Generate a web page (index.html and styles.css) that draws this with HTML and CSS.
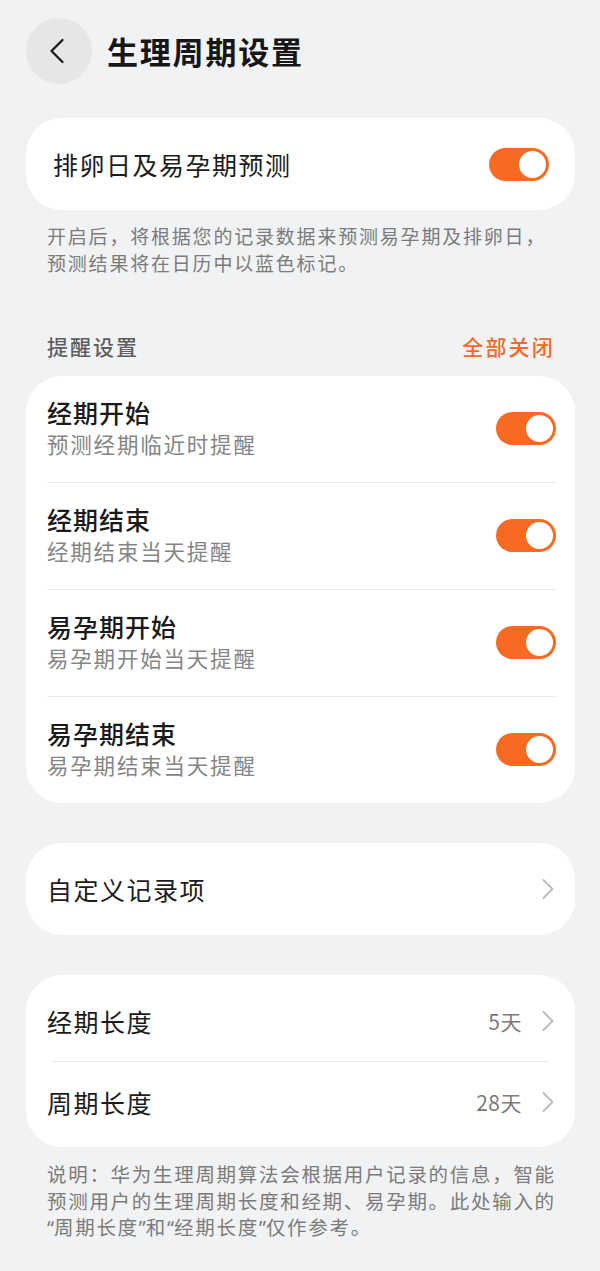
FILE: index.html
```html
<!DOCTYPE html>
<html lang="zh-CN">
<head>
<meta charset="utf-8">
<title>生理周期设置</title>
<link rel="stylesheet" href="styles.css">
</head>
<body>
<div class="page">
  <header class="topbar">
    <div class="back">
      <svg width="16" height="26" viewBox="0 0 16 26"><path d="M13.5 2 L2.5 13 L13.5 24" fill="none" stroke="#1c1c1c" stroke-width="2.3" stroke-linecap="round" stroke-linejoin="round"/></svg>
    </div>
    <h1 class="title">生理周期设置</h1>
  </header>

  <section class="card card-main">
    <div class="main-label">排卵日及易孕期预测</div>
    <div class="toggle"><span class="knob"></span></div>
  </section>
  <p class="desc">开启后，将根据您的记录数据来预测易孕期及排卵日，<br>预测结果将在日历中以蓝色标记。</p>

  <div class="section-head">
    <span class="section-title">提醒设置</span>
    <span class="section-action">全部关闭</span>
  </div>

  <section class="card card-list">
    <div class="row">
      <div class="row-text"><div class="row-title">经期开始</div><div class="row-sub">预测经期临近时提醒</div></div>
      <div class="toggle"><span class="knob"></span></div>
    </div>
    <div class="row">
      <div class="row-text"><div class="row-title">经期结束</div><div class="row-sub">经期结束当天提醒</div></div>
      <div class="toggle"><span class="knob"></span></div>
    </div>
    <div class="row">
      <div class="row-text"><div class="row-title">易孕期开始</div><div class="row-sub">易孕期开始当天提醒</div></div>
      <div class="toggle"><span class="knob"></span></div>
    </div>
    <div class="row">
      <div class="row-text"><div class="row-title">易孕期结束</div><div class="row-sub">易孕期结束当天提醒</div></div>
      <div class="toggle"><span class="knob"></span></div>
    </div>
  </section>

  <section class="card card-single">
    <div class="nav-label">自定义记录项</div>
    <svg class="chev" width="14" height="22" viewBox="0 0 14 22"><path d="M2.5 2 L11.5 11 L2.5 20" fill="none" stroke="#bdbdbd" stroke-width="2" stroke-linecap="round" stroke-linejoin="round"/></svg>
  </section>

  <section class="card card-values">
    <div class="vrow">
      <div class="nav-label">经期长度</div>
      <div class="vright"><span class="value">5天</span><svg class="chev" width="14" height="22" viewBox="0 0 14 22"><path d="M2.5 2 L11.5 11 L2.5 20" fill="none" stroke="#bdbdbd" stroke-width="2" stroke-linecap="round" stroke-linejoin="round"/></svg></div>
    </div>
    <div class="vdivider"></div>
    <div class="vrow">
      <div class="nav-label">周期长度</div>
      <div class="vright"><span class="value">28天</span><svg class="chev" width="14" height="22" viewBox="0 0 14 22"><path d="M2.5 2 L11.5 11 L2.5 20" fill="none" stroke="#bdbdbd" stroke-width="2" stroke-linecap="round" stroke-linejoin="round"/></svg></div>
    </div>
  </section>

  <p class="note">说明：华为生理周期算法会根据用户记录的信息，智能预测用户的生理周期长度和经期、易孕期。此处输入的<span class="q">“</span>周期长度<span class="q">”</span>和<span class="q">“</span>经期长度<span class="q">”</span>仅作参考。</p>
</div>
</body>
</html>
```

FILE: styles.css
```css
* { box-sizing: border-box; }
html, body { margin: 0; padding: 0; }
body {
  background: #f1f2f4;
  font-family: "Noto Sans CJK SC", "Noto Sans", sans-serif;
  color: #1a1a1a;
}
.page {
  width: 600px;
  padding: 18px 25px 0 26px;
}
.topbar {
  display: flex;
  align-items: center;
  gap: 15px;
  height: 66px;
}
.back {
  width: 66px;
  height: 66px;
  border-radius: 50%;
  background: #e5e6e8;
  display: flex;
  align-items: center;
  justify-content: center;
  padding-right: 4px;
}
.title {
  margin: 0;
  font-size: 31px;
  letter-spacing: 1.8px;
  font-weight: 700;
  line-height: 40px;
  color: #161616;
}
.card {
  background: #fff;
  border-radius: 36px;
}
.card-main {
  margin-top: 34px;
  height: 92px;
  display: flex;
  align-items: center;
  justify-content: space-between;
  padding: 0 26px 0 27px;
}
.main-label {
  font-size: 25px;
  letter-spacing: 1.5px;
  font-weight: 400;
  color: #1c1c1c;
}
.toggle {
  width: 60px;
  height: 33px;
  border-radius: 17px;
  background: #f76a21;
  position: relative;
  flex: none;
}
.knob {
  position: absolute;
  right: 3px;
  top: 3px;
  width: 27px;
  height: 27px;
  border-radius: 50%;
  background: #fff;
}
.desc {
  margin: 12px 0 0 21px;
  font-size: 19px;
  letter-spacing: 1.8px;
  line-height: 27px;
  color: #7b7b7b;
}
.section-head {
  margin-top: 55px;
  display: flex;
  justify-content: space-between;
  align-items: center;
  height: 30px;
  padding: 0 20px 0 21px;
}
.section-title {
  font-size: 21px;
  letter-spacing: 2px;
  font-weight: 500;
  color: #5e5e5e;
}
.section-action {
  font-size: 21px;
  letter-spacing: 2.2px;
  font-weight: 500;
  color: #ef6b28;
}
.card-list {
  margin-top: 15px;
  padding: 0 19px 0 21px;
}
.row {
  height: 106px;
  display: flex;
  align-items: center;
  justify-content: space-between;
  padding-bottom: 2px;
}
.row + .row { border-top: 1px solid #e7e7e7; height: 107px; }
.row-title {
  font-size: 25px;
  letter-spacing: 1px;
  font-weight: 500;
  line-height: 32px;
  color: #1a1a1a;
}
.row-sub {
  font-size: 21.5px;
  letter-spacing: 1.8px;
  line-height: 32px;
  color: #858585;
}
.card-single {
  margin-top: 40px;
  height: 92px;
  display: flex;
  align-items: center;
  justify-content: space-between;
  padding: 0 20px 0 21px;
}
.nav-label {
  font-size: 25px;
  letter-spacing: 1.5px;
  font-weight: 400;
  color: #1c1c1c;
}
.chev { display: block; flex: none; }
.card-values {
  margin-top: 40px;
  padding: 6px 0 5px 0;
}
.vrow {
  height: 80px;
  display: flex;
  align-items: center;
  justify-content: space-between;
  padding: 0 20px 0 21px;
}
.vdivider {
  height: 1px;
  background: #e7e7e7;
  margin: 0 26px;
}
.vright {
  display: flex;
  align-items: center;
  gap: 17px;
}
.value {
  font-size: 21px;
  color: #7a7a7a;
  letter-spacing: 0.5px;
  margin-right: 2px;
}
.note {
  margin: 14px 0 0 21px;
  font-size: 19.5px;
  letter-spacing: 1.7px;
  line-height: 26.5px;
  color: #7b7b7b;
}
.q {
  font-family: "Noto Sans", sans-serif;
  letter-spacing: 0;
}
```
